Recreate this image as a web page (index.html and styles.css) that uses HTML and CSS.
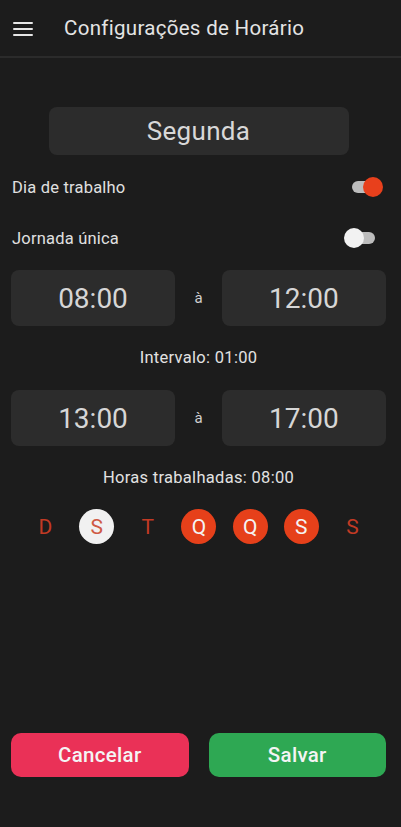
FILE: index.html
```html
<!DOCTYPE html>
<html lang="pt">

<head>
    <meta charset="UTF-8">
    <meta name="viewport" content="width=device-width, initial-scale=1.0">
    <title>Configurações de Horário</title>
    <link rel="stylesheet" href="styles.css">
</head>

<body>
    <header class="topbar">
        <button class="menu-btn" aria-label="Menu">
            <svg width="20" height="14" viewBox="0 0 20 14">
                <path d="M1 1h18M1 7h18M1 13h18" stroke="#e6e6e6" stroke-width="2" stroke-linecap="round" />
            </svg>
        </button>
        <h1 class="title">Configurações de Horário</h1>
    </header>

    <main class="content">
        <div class="day-name">Segunda</div>

        <div class="setting first">
            <span>Dia de trabalho</span>
            <span class="switch on"><span class="thumb"></span></span>
        </div>
        <div class="setting">
            <span>Jornada única</span>
            <span class="switch"><span class="thumb"></span></span>
        </div>

        <div class="time-row">
            <div class="time-box">08:00</div>
            <span class="sep">à</span>
            <div class="time-box">12:00</div>
        </div>
        <p class="info">Intervalo: 01:00</p>

        <div class="time-row">
            <div class="time-box">13:00</div>
            <span class="sep">à</span>
            <div class="time-box">17:00</div>
        </div>
        <p class="info">Horas trabalhadas: 08:00</p>

        <div class="week">
            <span class="day">D</span>
            <span class="day current">S</span>
            <span class="day">T</span>
            <span class="day active">Q</span>
            <span class="day active">Q</span>
            <span class="day active">S</span>
            <span class="day">S</span>
        </div>

        <div class="actions">
            <button class="btn cancel">Cancelar</button>
            <button class="btn save">Salvar</button>
        </div>
    </main>
</body>

</html>
```

FILE: styles.css
```css
* {
    box-sizing: border-box;
}

body {
    margin: 0;
    height: 100vh;
    display: flex;
    flex-direction: column;
    background-color: #1c1c1c;
    color: #e2e2e2;
    font-family: Roboto, "Noto Sans", Arial, sans-serif;
}

.topbar {
    height: 58px;
    display: flex;
    align-items: center;
    border-bottom: 2px solid #2b2b2b;
    padding-left: 13px;
}

.menu-btn {
    background: none;
    border: none;
    padding: 0;
    width: 20px;
    height: 14px;
    margin-top: 1px;
    display: flex;
}

.title {
    margin: 0 0 0 31px;
    font-size: 20.5px;
    font-weight: 400;
    color: #e4e4e4;
    letter-spacing: 0.3px;
}

.content {
    flex: 1;
    display: flex;
    flex-direction: column;
    padding: 49px 15px 50px 11px;
}

.day-name {
    align-self: center;
    width: 300px;
    height: 48px;
    border-radius: 8px;
    background-color: #2c2c2c;
    display: flex;
    align-items: center;
    justify-content: center;
    font-size: 26px;
    letter-spacing: 0.3px;
    color: #d8d8d8;
}

.setting {
    height: 32px;
    display: flex;
    align-items: center;
    justify-content: space-between;
    padding-left: 1px;
    font-size: 16.5px;
    letter-spacing: 0.2px;
    color: #e0e0e0;
}

.setting.first {
    margin-top: 16px;
}

.setting + .setting {
    margin-top: 19px;
}

.switch {
    position: relative;
    width: 23px;
    height: 12px;
    margin-right: 11px;
    border-radius: 6px;
    background-color: #bdbdbd;
}

.switch .thumb {
    position: absolute;
    top: -4px;
    left: -8px;
    width: 20px;
    height: 20px;
    border-radius: 50%;
    background-color: #f2f2f2;
}

.switch.on {
    margin-right: 8px;
    width: 26px;
}

.switch.on .thumb {
    left: auto;
    right: -5px;
    background-color: #e8401c;
}

.time-row {
    display: flex;
    align-items: center;
    justify-content: space-between;
    margin-top: 16px;
}

.info + .time-row {
    margin-top: 22px;
}

.time-box {
    width: 164px;
    height: 56px;
    border-radius: 8px;
    background-color: #2c2c2c;
    display: flex;
    align-items: center;
    justify-content: center;
    font-size: 28px;
    color: #d6d6d6;
}

.sep {
    font-size: 15px;
    color: #d0d0d0;
}

.info {
    margin: 22px 0 0;
    line-height: 20px;
    text-align: center;
    font-size: 16.5px;
    letter-spacing: 0.3px;
    color: #e2e2e2;
}

.week {
    display: flex;
    justify-content: space-between;
    margin-top: 21px;
    padding: 0 16px 0 17px;
}

.day {
    width: 35px;
    height: 35px;
    border-radius: 50%;
    display: flex;
    align-items: center;
    justify-content: center;
    font-size: 21px;
    color: #c23a24;
}

.day.current {
    background-color: #f1f1f1;
    color: #cf5a44;
}

.day.active {
    background-color: #e6401a;
    color: #f4f4f4;
}

.actions {
    margin-top: auto;
    display: flex;
    gap: 20px;
}

.btn {
    flex: 1;
    height: 44px;
    border: none;
    border-radius: 10px;
    font-family: inherit;
    font-size: 20.5px;
    font-weight: 500;
    letter-spacing: 0.3px;
    color: #f4f4f4;
    cursor: pointer;
}

.btn.cancel {
    background-color: #ea3157;
}

.btn.save {
    background-color: #2ea853;
}
```
